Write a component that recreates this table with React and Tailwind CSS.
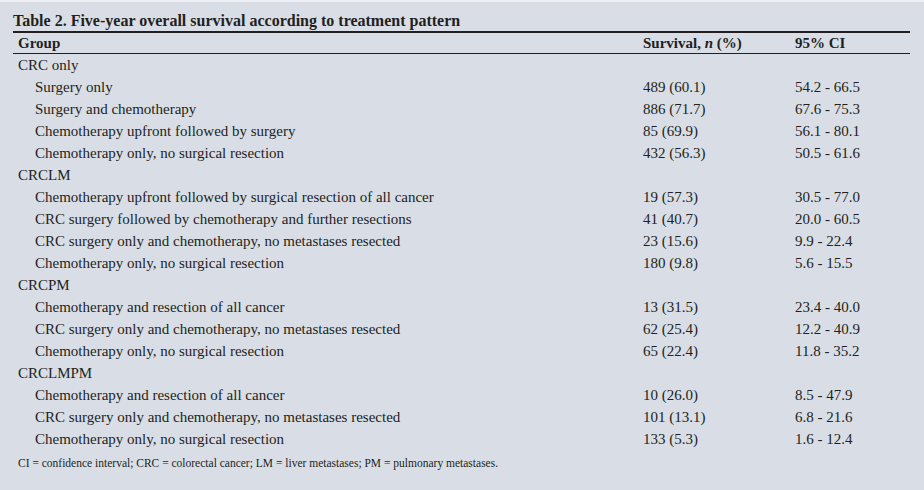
const ROWS = [
  { group: "CRC only" },
  { label: "Surgery only", n: "489 (60.1)", ci: "54.2 - 66.5" },
  { label: "Surgery and chemotherapy", n: "886 (71.7)", ci: "67.6 - 75.3" },
  { label: "Chemotherapy upfront followed by surgery", n: "85 (69.9)", ci: "56.1 - 80.1" },
  { label: "Chemotherapy only, no surgical resection", n: "432 (56.3)", ci: "50.5 - 61.6" },
  { group: "CRCLM" },
  { label: "Chemotherapy upfront followed by surgical resection of all cancer", n: "19 (57.3)", ci: "30.5 - 77.0" },
  { label: "CRC surgery followed by chemotherapy and further resections", n: "41 (40.7)", ci: "20.0 - 60.5" },
  { label: "CRC surgery only and chemotherapy, no metastases resected", n: "23 (15.6)", ci: "9.9 - 22.4" },
  { label: "Chemotherapy only, no surgical resection", n: "180 (9.8)", ci: "5.6 - 15.5" },
  { group: "CRCPM" },
  { label: "Chemotherapy and resection of all cancer", n: "13 (31.5)", ci: "23.4 - 40.0" },
  { label: "CRC surgery only and chemotherapy, no metastases resected", n: "62 (25.4)", ci: "12.2 - 40.9" },
  { label: "Chemotherapy only, no surgical resection", n: "65 (22.4)", ci: "11.8 - 35.2" },
  { group: "CRCLMPM" },
  { label: "Chemotherapy and resection of all cancer", n: "10 (26.0)", ci: "8.5 - 47.9" },
  { label: "CRC surgery only and chemotherapy, no metastases resected", n: "101 (13.1)", ci: "6.8 - 21.6" },
  { label: "Chemotherapy only, no surgical resection", n: "133 (5.3)", ci: "1.6 - 12.4" },
];

export default function App() {
  return (
    <div className="w-[924px] h-[490px] bg-[#d9dee6] border-t-2 border-[#eef0f3] text-[#231f20] font-['Liberation_Serif',serif] pl-[13px] pr-[14px] overflow-hidden">
      <div className="h-[31px] flex items-end pb-[2px] border-b-2 border-[#231f20]">
        <h1 className="text-[16px] font-bold leading-none">
          Table 2. Five-year overall survival according to treatment pattern
        </h1>
      </div>
      <div className="grid grid-cols-[630px_152px_1fr] h-[21px] items-center border-b border-[#231f20] text-[15px] font-bold leading-none">
        <div className="pl-[5px]">Group</div>
        <div>
          Survival, <i>n</i> (%)
        </div>
        <div>95% CI</div>
      </div>
      {ROWS.map((row, i) =>
        row.group ? (
          <div key={i} className="h-[22px] flex items-center pl-[5px] text-[15px] leading-none">
            {row.group}
          </div>
        ) : (
          <div key={i} className="grid grid-cols-[630px_152px_1fr] h-[22px] items-center text-[15px] leading-none">
            <div className="pl-[22px]">{row.label}</div>
            <div>{row.n}</div>
            <div>{row.ci}</div>
          </div>
        )
      )}
      <p className="pl-[5px] mt-[8px] text-[11.5px] leading-none">
        CI = confidence interval; CRC = colorectal cancer; LM = liver metastases; PM = pulmonary metastases.
      </p>
    </div>
  );
}
